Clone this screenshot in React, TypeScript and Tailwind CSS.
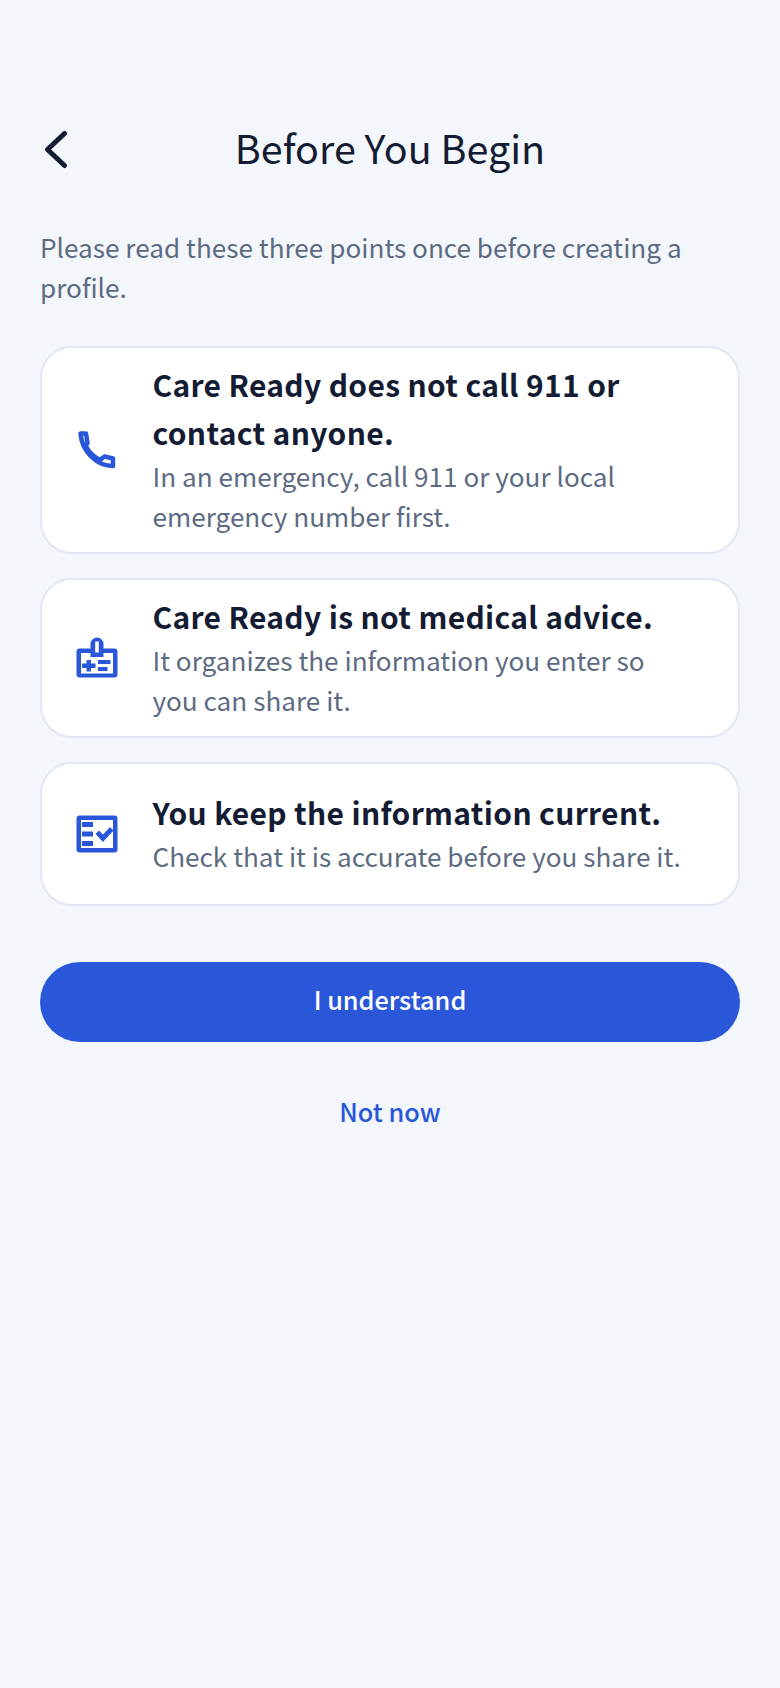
import React from "react";

const font = { fontFamily: '"Noto Sans CJK SC", "Noto Sans", sans-serif' };

function PhoneIcon() {
  return (
    <svg viewBox="0 0 44 44" className="mt-1 h-11 w-11 shrink-0" fill="none" stroke="#2a57d9" strokeWidth="4.500" strokeLinejoin="round">
      <path d="M5.500 5.500H11l1.500 9.500-2 2.500c3 6 8.500 11.500 14.500 14.500l4.500-3.500 8.500 2v7.500C22 38 7 24 5.500 5.500z" />
    </svg>
  );
}

function BadgeIcon() {
  return (
    <svg viewBox="0 0 44 44" className="mt-1 h-11 w-11 shrink-0" fill="#2a57d9">
      <path
        fillRule="evenodd"
        d="M22 1.500a6.500 6.500 0 0 1 6.500 6.500v4.500H39.500a3 3 0 0 1 3 3v23a3 3 0 0 1-3 3h-35a3 3 0 0 1-3-3v-23a3 3 0 0 1 3-3h11V8A6.500 6.500 0 0 1 22 1.500zM20.200 5.500v11h3.600v-11zM6 17v20.500h32V17h-9.500v4h-13v-4z"
      />
      <path d="M11.500 24h4.500v3.500h4.500v4.500H16v3.500h-4.500V32H7v-4.500h4.500z" />
      <rect x="23" y="24" width="12.500" height="4" />
      <rect x="23" y="31" width="9.500" height="4" />
    </svg>
  );
}

function ChecklistIcon() {
  return (
    <svg viewBox="0 0 44 44" className="mt-1 h-11 w-11 shrink-0" fill="#2a57d9">
      <path
        fillRule="evenodd"
        d="M4.500 3.500h35a3 3 0 0 1 3 3v31a3 3 0 0 1-3 3h-35a3 3 0 0 1-3-3v-31a3 3 0 0 1 3-3zM6 8v28h32V8z"
      />
      <rect x="7" y="10" width="11" height="5" />
      <rect x="7" y="19.500" width="11" height="5" />
      <rect x="7" y="29" width="11" height="5" />
      <path d="M20.500 22l3.500-3.500 4 4 7-7.500 3.500 3.500L28 30z" />
    </svg>
  );
}

type Point = { icon: React.ReactNode; title: string; body: string; pad: string };

const points: Point[] = [
  {
    icon: <PhoneIcon />,
    title: "Care Ready does not call 911 or contact anyone.",
    body: "In an emergency, call 911 or your local emergency number first.",
    pad: "pt-[12px] pb-[16px]",
  },
  {
    icon: <BadgeIcon />,
    title: "Care Ready is not medical advice.",
    body: "It organizes the information you enter so you can share it.",
    pad: "pt-[12px] pb-[16px]",
  },
  {
    icon: <ChecklistIcon />,
    title: "You keep the information current.",
    body: "Check that it is accurate before you share it.",
    pad: "pt-[24px] pb-[28px]",
  },
];

export default function App() {
  return (
    <div className="min-h-[1688px] bg-[#f3f6fb] px-10 pt-[117px]" style={font}>
      <header className="relative flex h-[60px] items-center justify-center">
        <button aria-label="Back" className="absolute left-0 top-1/2 -translate-y-1/2">
          <svg viewBox="0 0 30 44" className="h-11 w-[30px]" fill="none" stroke="#141c33" strokeWidth="5" strokeLinecap="round" strokeLinejoin="round">
            <path d="M24.500 8.500 7.500 24.500 24.500 40.500" />
          </svg>
        </button>
        <h1 className="text-[39.500px] font-normal leading-[60px] text-[#141c33]">Before You Begin</h1>
      </header>

      <p className="mt-[50px] text-[26.150px] leading-[40px] text-[#5d6b82]">
        Please read these three points once before creating a profile.
      </p>

      <div className="mt-[39px] flex flex-col gap-[24px]">
        {points.map((point) => (
          <article
            key={point.title}
            className={`flex items-center gap-[33.500px] rounded-[32px] border-2 border-[#e1e8f3] bg-white pl-[33px] pr-[52px] ${point.pad}`}
          >
            {point.icon}
            <div className="min-w-0 flex-1">
              <h2 className="text-[30px] font-bold leading-[48px] tracking-[0.33px] text-[#141c33]">{point.title}</h2>
              <p className="text-[26.150px] leading-[40px] text-[#5d6b82]">{point.body}</p>
            </div>
          </article>
        ))}
      </div>

      <button className="mt-[56px] flex h-20 w-full items-center justify-center rounded-full bg-[#2a57d9] pb-[4px] text-[25.300px] font-medium text-white">
        I understand
      </button>
      <button className="mt-[42px] flex h-[56px] w-full items-center justify-center text-[25.300px] font-medium text-[#2a57d9]">
        Not now
      </button>
    </div>
  );
}
